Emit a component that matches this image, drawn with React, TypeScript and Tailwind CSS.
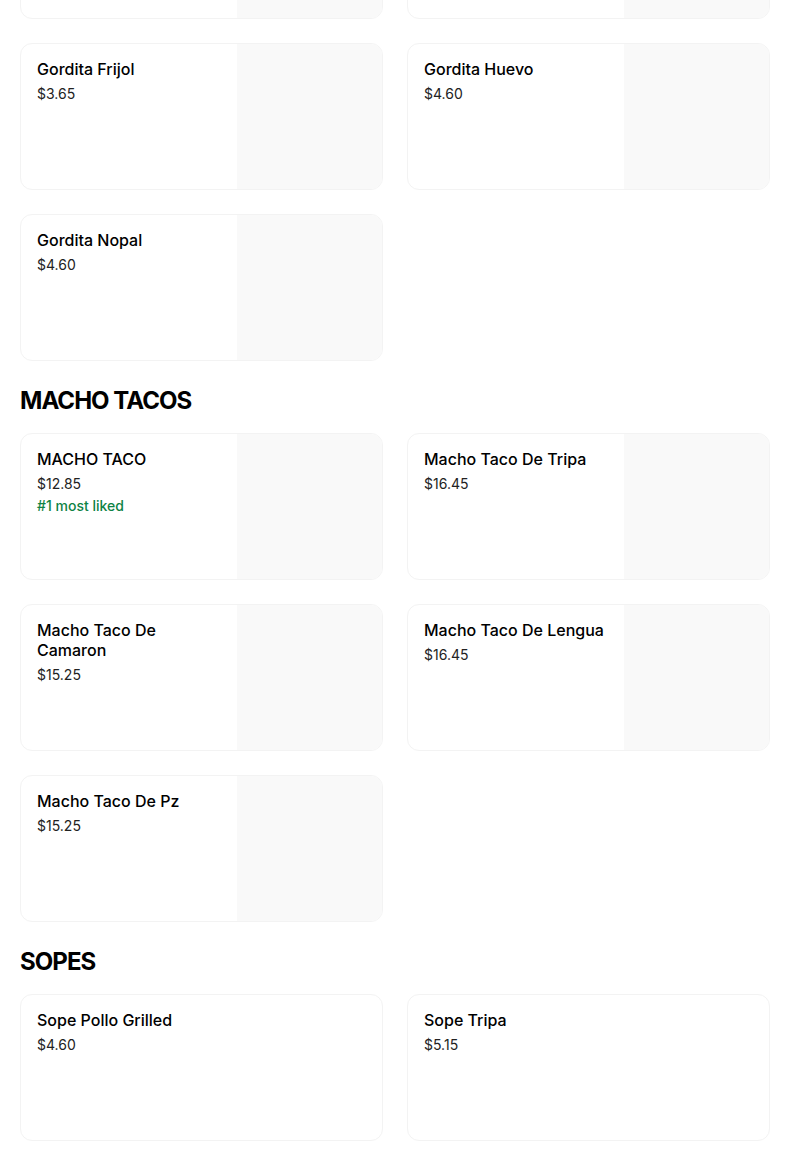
type Item = { name: string; price: string; tag?: string; image?: boolean };

type Section = { title?: string; items: Item[] };

const sections: Section[] = [
  {
    items: [
      { name: '', price: '', image: true },
      { name: ' ', price: '', image: true },
      { name: 'Gordita Frijol', price: '$3.65', image: true },
      { name: 'Gordita Huevo', price: '$4.60', image: true },
      { name: 'Gordita Nopal', price: '$4.60', image: true },
    ],
  },
  {
    title: 'MACHO TACOS',
    items: [
      { name: 'MACHO TACO', price: '$12.85', tag: '#1 most liked', image: true },
      { name: 'Macho Taco De Tripa', price: '$16.45', image: true },
      { name: 'Macho Taco De Camaron', price: '$15.25', image: true },
      { name: 'Macho Taco De Lengua', price: '$16.45', image: true },
      { name: 'Macho Taco De Pz', price: '$15.25', image: true },
    ],
  },
  {
    title: 'SOPES',
    items: [
      { name: 'Sope Pollo Grilled', price: '$4.60' },
      { name: 'Sope Tripa', price: '$5.15' },
    ],
  },
];

function ItemCard({ item }: { item: Item }) {
  return (
    <div className="flex h-[147px] overflow-hidden rounded-xl border border-[#f3f3f3] bg-white">
      <div className="min-w-0 flex-1 px-4 pt-[15px]">
        {item.name.trim() && (
          <>
            <div className="text-[16px] font-medium leading-5 text-black">{item.name}</div>
            <div className="mt-[5px] text-[14px] leading-5 text-[#222]">{item.price}</div>
          </>
        )}
        {item.tag && (
          <div className="mt-[2px] text-[14px] font-medium leading-5 text-[#0e8345]">{item.tag}</div>
        )}
      </div>
      {item.image && <div className="h-full w-[145px] shrink-0 bg-[#f9f9f9]" />}
    </div>
  );
}

export default function App() {
  return (
    <div className="min-h-screen overflow-hidden bg-white font-['Inter','Liberation_Sans',sans-serif]">
      <div className="-mt-[128px] flex w-[770px] flex-col pl-5 pb-10">
        {sections.map((section, i) => (
          <div key={i} className={i > 0 ? 'mt-6' : ''}>
            {section.title && (
              <h2 className="mb-4 text-[24px] font-bold leading-8 tracking-[-0.04em] text-black">
                {section.title}
              </h2>
            )}
            <div className="grid grid-cols-2 gap-6">
              {section.items.map((item, j) => (
                <ItemCard key={j} item={item} />
              ))}
            </div>
          </div>
        ))}
      </div>
    </div>
  );
}
